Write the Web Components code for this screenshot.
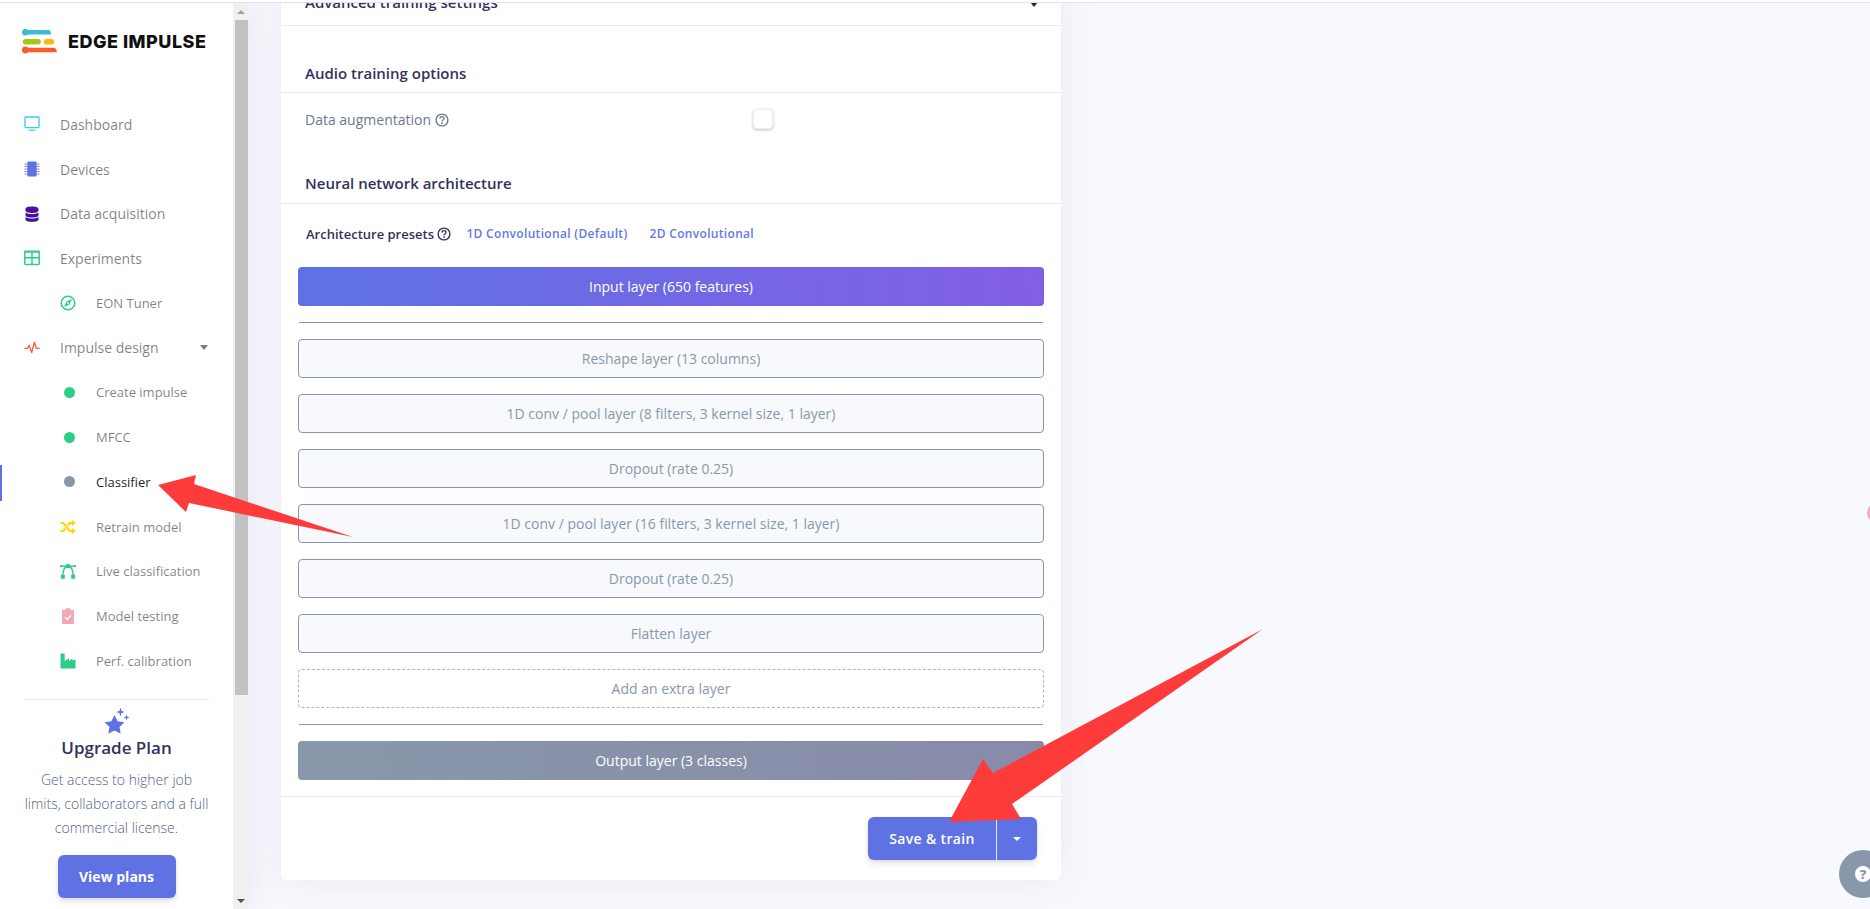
<!DOCTYPE html>
<html>
<head>
<meta charset="utf-8">
<title>Edge Impulse - Classifier</title>
<style>
  html, body { margin: 0; height: 909px; overflow: hidden; background: #f8f9fe; }
  body { font-family: "Open Sans", "Liberation Sans", sans-serif; position: relative; }
</style>
</head>
<body>
<ei-app>
  <ei-sidebar slot="sidebar">
    <ei-nav-item icon="monitor">Dashboard</ei-nav-item>
    <ei-nav-item icon="chip">Devices</ei-nav-item>
    <ei-nav-item icon="database">Data acquisition</ei-nav-item>
    <ei-nav-item icon="table">Experiments</ei-nav-item>
    <ei-nav-item icon="compass" sub>EON Tuner</ei-nav-item>
    <ei-nav-item icon="pulse" caret>Impulse design</ei-nav-item>
    <ei-nav-item icon="dot-green" sub>Create impulse</ei-nav-item>
    <ei-nav-item icon="dot-green" sub>MFCC</ei-nav-item>
    <ei-nav-item icon="dot-grey" sub active>Classifier</ei-nav-item>
    <ei-nav-item icon="shuffle" sub>Retrain model</ei-nav-item>
    <ei-nav-item icon="bezier" sub>Live classification</ei-nav-item>
    <ei-nav-item icon="clipboard" sub>Model testing</ei-nav-item>
    <ei-nav-item icon="factory" sub>Perf. calibration</ei-nav-item>
  </ei-sidebar>
  <ei-card slot="main">
    <ei-advanced-row>Advanced training settings</ei-advanced-row>
    <ei-heading>Audio training options</ei-heading>
    <ei-option-row>Data augmentation</ei-option-row>
    <ei-heading lift>Neural network architecture</ei-heading>
    <ei-presets></ei-presets>
    <ei-layer-stack>
      <ei-layer kind="input">Input layer (650 features)</ei-layer>
      <ei-rule></ei-rule>
      <ei-layer>Reshape layer (13 columns)</ei-layer>
      <ei-layer>1D conv / pool layer (8 filters, 3 kernel size, 1 layer)</ei-layer>
      <ei-layer>Dropout (rate 0.25)</ei-layer>
      <ei-layer>1D conv / pool layer (16 filters, 3 kernel size, 1 layer)</ei-layer>
      <ei-layer>Dropout (rate 0.25)</ei-layer>
      <ei-layer>Flatten layer</ei-layer>
      <ei-layer kind="add">Add an extra layer</ei-layer>
      <ei-rule></ei-rule>
      <ei-layer kind="output">Output layer (3 classes)</ei-layer>
    </ei-layer-stack>
    <ei-card-footer></ei-card-footer>
  </ei-card>
</ei-app>
<ei-overlays></ei-overlays>

<script>
const ICONS = {
  monitor: `<rect x="1" y="1" width="14" height="10.6" rx=".8" fill="none" stroke="#36cdf2" stroke-width="1.3"/><path d="M4.6 14.2h6.8" stroke="#36cdf2" stroke-width="1.3"/>`,
  chip: `<rect x="3.2" y="0.5" width="9.6" height="15" rx="1.6" fill="#5e72e4"/><path d="M.6 3h2M.6 5.5h2M.6 8h2M.6 10.5h2M.6 13h2M13.4 3h2M13.4 5.5h2M13.4 8h2M13.4 10.5h2M13.4 13h2" stroke="#5e72e4" stroke-width="1"/>`,
  database: `<path d="M1.5 3C1.5 1.3 4.4.5 8 .5s6.5.8 6.5 2.5v1.6c0 1.7-2.9 2.5-6.5 2.5s-6.5-.8-6.5-2.500zM1.500 6.600C3 7.700 5.400 8.100 8 8.100s5-.4 6.500-1.500v2.600c0 1.600-2.900 2.400-6.500 2.400s-6.500-.8-6.500-2.400zM1.500 11.100c1.500 1.100 3.900 1.500 6.500 1.500s5-.4 6.500-1.500v2.300c0 1.600-2.900 2.400-6.500 2.400s-6.500-.8-6.500-2.400z" fill="#4a0f9e"/>`,
  table: `<rect x=".8" y="1.200" width="14.400" height="13.200" rx=".6" fill="none" stroke="#2dce89" stroke-width="1.500"/><path d="M.8 7.800h14.400M8 1.200v13.200" stroke="#2dce89" stroke-width="1.500"/><path d="M.8 2h14.400" stroke="#2dce89" stroke-width="1.500"/>`,
  compass: `<circle cx="8" cy="8" r="6.800" fill="none" stroke="#2dce89" stroke-width="1.500"/><path d="M12 4 9.600 9.600 4 12 6.400 6.400z" fill="#2dce89"/><circle cx="8" cy="8" r=".9" fill="#fff"/>`,
  pulse: `<path d="M.3 8.300h3.200L5.200 5.200l2.500 7.300 2.700-10.400 1.900 6.200h3.400" fill="none" stroke="#fb5a3c" stroke-width="1.300" stroke-linejoin="round"/>`,
  shuffle: `<path d="M.6 4h2.800l6.400 8h2.600M.6 12h2.800l2-2.500M8 6.400 9.800 4h2.600" fill="none" stroke="#ffd600" stroke-width="2.200"/><path d="M12 .9 15.800 4 12 7.100zM12 8.900 15.800 12 12 15.100z" fill="#ffd600"/>`,
  bezier: `<path d="M2.800 12.500C3 7 5 3.500 8 3.200c3 .3 5 3.800 5.200 9.300M.5 3.200h15" fill="none" stroke="#2dce89" stroke-width="1.500"/><rect x="6" y="1" width="4" height="4" rx=".6" fill="#2dce89"/><rect x=".8" y="11.800" width="4" height="4" rx=".6" fill="#2dce89"/><rect x="11.200" y="11.800" width="4" height="4" rx=".6" fill="#2dce89"/><circle cx="1" cy="3.200" r="1.100" fill="#2dce89"/><circle cx="15" cy="3.200" r="1.100" fill="#2dce89"/>`,
  clipboard: `<rect x="2" y="2" width="12" height="14" rx="1" fill="#f4a6b8"/><rect x="5.500" y=".3" width="5" height="3.500" rx=".8" fill="#f4a6b8"/><path d="M5 9.300 7.200 11.400 11 7.500" fill="none" stroke="#fff" stroke-width="1.500"/>`,
  factory: `<path d="M.5 15.500V.5h4.200v7.600L9 5.200v3l3.300-3 .2 2.300 3-1v9z" fill="#2dce89"/>`,
};

class EiIcon extends HTMLElement {
  constructor() {
    super();
    this.attachShadow({ mode: "open" });
  }

  connectedCallback() {
    const name = this.getAttribute("name");
    const dot = name.startsWith("dot-");
    this.shadowRoot.innerHTML = `
      <style>
        :host { display: flex; width: 16px; height: 16px; align-items: center; justify-content: center; }
        svg { width: 16px; height: 16px; display: block; }
        .dot { width: 11px; height: 11px; border-radius: 50%; background: ${name === "dot-grey" ? "#8898aa" : "#2dce89"}; margin-left: 2px; }
      </style>
      ${dot ? `<div class="dot"></div>` : `<svg viewBox="0 0 16 16">${ICONS[name]}</svg>`}
    `;
  }
}

class EiApp extends HTMLElement {
  constructor() {
    super();
    this.attachShadow({ mode: "open" });
    this.shadowRoot.innerHTML = `
      <style>
        :host { display: flex; flex-direction: column; height: 909px; overflow: hidden; }
        .top { flex: none; height: 2px; background: #fff; border-bottom: 1px solid #e3e3e6; position: relative; z-index: 3; }
        .row { flex: 1; display: flex; min-height: 0; }
        .main { flex: 1; min-width: 0; background: #f8f9fe; }
      </style>
      <div class="top"></div>
      <div class="row">
        <slot name="sidebar"></slot>
        <div class="main"><slot name="main"></slot></div>
      </div>
    `;
  }
}

class EiLogo extends HTMLElement {
  constructor() {
    super();
    this.attachShadow({ mode: "open" });
    this.shadowRoot.innerHTML = `
      <style>
        :host { display: flex; align-items: center; gap: 11px; }
        svg { width: 35px; height: 25px; display: block; }
        span { font: 800 18px/24px Inter, "Liberation Sans", sans-serif; color: #101014; letter-spacing: .5px; white-space: nowrap; }
      </style>
      <svg viewBox="0 0 35 25">
        <circle cx="3.300" cy="3.200" r="3.300" fill="#3abcd3"/>
        <path d="M3 1h24c1.200 0 1.700 1 2 4.500H3z" fill="#3abcd3"/>
        <rect x=".8" y="10" width="18" height="5.400" rx="2.700" fill="#a3c916"/>
        <rect x="21.800" y="10" width="10.400" height="5.400" rx="2.700" fill="#fbb90f"/>
        <circle cx="3.300" cy="21" r="3.400" fill="#fd5b2c"/>
        <path d="M3 18.800h29c1.500 0 2.500 1.700 3 4.500H3z" fill="#fd5b2c"/>
      </svg>
      <span>EDGE IMPULSE</span>
    `;
  }
}

class EiScrollbar extends HTMLElement {
  constructor() {
    super();
    this.attachShadow({ mode: "open" });
    this.shadowRoot.innerHTML = `
      <style>
        :host { display: flex; flex-direction: column; flex: none; width: 15px; background: #f1f1f1; }
        .btn { flex: none; height: 17px; display: flex; align-items: center; justify-content: center; }
        .up { width: 0; height: 0; border: 4px solid transparent; border-top: 0; border-bottom: 4px solid #a3a3a3; }
        .down { width: 0; height: 0; border: 4px solid transparent; border-bottom: 0; border-top: 4px solid #505050; }
        .track { flex: 1; padding-left: 2px; }
        .thumb { height: 675px; background: #c1c1c1; }
      </style>
      <div class="btn"><div class="up"></div></div>
      <div class="track"><div class="thumb"></div></div>
      <div class="btn"><div class="down"></div></div>
    `;
  }
}

class EiSidebar extends HTMLElement {
  constructor() {
    super();
    this.attachShadow({ mode: "open" });
    this.shadowRoot.innerHTML = `
      <style>
        :host { display: flex; flex: none; width: 248px; height: 906px; position: relative; z-index: 2; box-shadow: 0 0 32px rgba(136,152,170,.2); }
        .pane { width: 233px; background: #fff; display: flex; flex-direction: column; }
        ei-logo { margin: 26px 0 0 22px; }
        nav { margin-top: 48px; display: flex; flex-direction: column; }
        ei-upgrade { margin-top: 16px; }
      </style>
      <div class="pane">
        <ei-logo></ei-logo>
        <nav><slot></slot></nav>
        <ei-upgrade></ei-upgrade>
      </div>
      <ei-scrollbar></ei-scrollbar>
    `;
  }
}

class EiNavItem extends HTMLElement {
  constructor() {
    super();
    this.attachShadow({ mode: "open" });
  }

  connectedCallback() {
    const sub = this.hasAttribute("sub");
    const active = this.hasAttribute("active");
    this.shadowRoot.innerHTML = `
      <style>
        :host { display: flex; align-items: center; height: 44.7px; position: relative; padding-left: ${sub ? 60 : 24}px; font-size: ${sub ? 13 : 14}px; color: ${active ? "rgba(0,0,0,.9)" : "rgba(0,0,0,.5)"}; white-space: nowrap; }
        ei-icon { flex: none; margin-right: 20px; }
        .bar { position: absolute; left: 0; top: 5px; width: 2px; height: 36px; background: #5e72e4; }
        .caret { position: absolute; left: 200px; top: 20px; width: 0; height: 0; border: 4.500px solid transparent; border-bottom: 0; border-top: 5px solid #7a7a7a; }
      </style>
      ${active ? `<div class="bar"></div>` : ""}
      <ei-icon name="${this.getAttribute("icon")}"></ei-icon>
      <span><slot></slot></span>
      ${this.hasAttribute("caret") ? `<div class="caret"></div>` : ""}
    `;
  }
}

class EiUpgrade extends HTMLElement {
  constructor() {
    super();
    this.attachShadow({ mode: "open" });
    this.shadowRoot.innerHTML = `
      <style>
        :host { display: block; margin: 0 24px; border-top: 1px solid #e6e6ea; text-align: center; }
        svg { display: block; width: 28px; height: 28px; margin: 7px auto 0; position: relative; left: 0; }
        h3 { margin: 0; font-size: 17px; line-height: 26px; font-weight: 600; color: #32325d; }
        p { margin: 7px 0 0; font-size: 14px; line-height: 24px; font-weight: 300; color: #525f7f; }
        button { display: block; margin: 15px auto 0; width: 118px; height: 43px; border: 0; border-radius: 6px; background: #5e72e4; color: #fff; font: 700 14px "Open Sans", sans-serif; box-shadow: 0 4px 6px rgba(50,50,93,.11), 0 1px 3px rgba(0,0,0,.08); }
      </style>
      <svg viewBox="0 0 28 28">
        <path d="M11.500 8 14.600 14.200 21.500 15.200 16.500 20 17.700 26.800 11.500 23.600 5.300 26.800 6.500 20 1.500 15.200 8.400 14.200z" fill="#5e72e4"/>
        <path d="M17.500 .5 18.600 3.900 22 5 18.600 6.100 17.500 9.500 16.400 6.100 13 5 16.400 3.900z" fill="#5e72e4"/>
        <path d="M23.500 7.500 24.300 9.700 26.500 10.500 24.300 11.300 23.500 13.500 22.700 11.300 20.500 10.500 22.700 9.700z" fill="#5e72e4"/>
      </svg>
      <h3>Upgrade Plan</h3>
      <p>Get access to higher job limits, collaborators and a full commercial license.</p>
      <button>View plans</button>
    `;
  }
}

class EiCard extends HTMLElement {
  constructor() {
    super();
    this.attachShadow({ mode: "open" });
    this.shadowRoot.innerHTML = `
      <style>
        :host { display: block; width: 780px; margin: -24px 0 0 33px; background: #fff; border-radius: 6px; box-shadow: 0 0 32px rgba(136,152,170,.15); color: #525f7f; }
      </style>
      <slot></slot>
    `;
  }
}

class EiAdvancedRow extends HTMLElement {
  constructor() {
    super();
    this.attachShadow({ mode: "open" });
    this.shadowRoot.innerHTML = `
      <style>
        :host { display: flex; align-items: center; justify-content: space-between; box-sizing: border-box; height: 47px; padding: 0 24px; border-bottom: 1px solid #e9ecef; font-size: 15px; font-weight: 600; color: #32325d; }
        .caret { width: 0; height: 0; border: 4.500px solid transparent; border-bottom: 0; border-top: 5px solid #172b4d; margin: 5px -1px 0 0; }
      </style>
      <span><slot></slot></span>
      <div class="caret"></div>
    `;
  }
}

class EiHeading extends HTMLElement {
  constructor() {
    super();
    this.attachShadow({ mode: "open" });
    this.shadowRoot.innerHTML = `
      <style>
        :host { display: block; padding: 36px 24px 8px; line-height: 22px; border-bottom: 1px solid #e9ecef; font-size: 15px; font-weight: 600; color: #32325d; }
        :host([lift]) { padding: 35px 24px 9px; }
      </style>
      <slot></slot>
    `;
  }
}

class EiHelpIcon extends HTMLElement {
  constructor() {
    super();
    this.attachShadow({ mode: "open" });
    this.shadowRoot.innerHTML = `
      <style>
        :host { display: inline-flex; width: 14px; height: 14px; vertical-align: -2px; }
        svg { width: 14px; height: 14px; }
      </style>
      <svg viewBox="0 0 14 14">
        <circle cx="7" cy="7" r="5.900" fill="none" stroke="currentColor" stroke-width="1.400"/>
        <path d="M5 5.500C5 4.300 5.900 3.700 7 3.700s2 .7 2 1.700c0 1.500-2 1.500-2 3" fill="none" stroke="currentColor" stroke-width="1.300"/>
        <circle cx="7" cy="10.100" r=".9" fill="currentColor"/>
      </svg>
    `;
  }
}

class EiOptionRow extends HTMLElement {
  constructor() {
    super();
    this.attachShadow({ mode: "open" });
    this.shadowRoot.innerHTML = `
      <style>
        :host { display: grid; grid-template-columns: 448px auto; grid-template-rows: 22px; align-items: center; padding: 16px 24px 6px; font-size: 14px; line-height: 22px; color: #6b7a90; }
        .box { width: 20px; height: 20px; margin-top: -2px; box-sizing: border-box; border-radius: 4px; background: #fff; border: 1px solid #eceef1; box-shadow: 0 1px 3px rgba(50,50,93,.3); }
      </style>
      <div><slot></slot> <ei-help-icon></ei-help-icon></div>
      <div class="box"></div>
    `;
  }
}

class EiPresets extends HTMLElement {
  constructor() {
    super();
    this.attachShadow({ mode: "open" });
    this.shadowRoot.innerHTML = `
      <style>
        :host { display: flex; align-items: center; height: 20px; padding: 20px 0 23px 25px; font-size: 13px; line-height: 20px; white-space: nowrap; }
        .label { font-weight: 600; color: #32325d; margin-right: 15px; }
        a { font-size: 12px; font-weight: 600; letter-spacing: .32px; color: #6478e6; margin-right: 22px; }
      </style>
      <span class="label">Architecture presets <ei-help-icon></ei-help-icon></span>
      <a>1D Convolutional (Default)</a>
      <a>2D Convolutional</a>
    `;
  }
}

class EiLayerStack extends HTMLElement {
  constructor() {
    super();
    this.attachShadow({ mode: "open" });
    this.shadowRoot.innerHTML = `
      <style>
        :host { display: flex; flex-direction: column; gap: 16px; padding: 0 17px 16px; }
      </style>
      <slot></slot>
    `;
  }
}

class EiRule extends HTMLElement {
  constructor() {
    super();
    this.attachShadow({ mode: "open" });
    this.shadowRoot.innerHTML = `
      <style>
        :host { display: block; height: 1px; margin: 0 1px; background: #8898aa; }
      </style>
    `;
  }
}

class EiLayer extends HTMLElement {
  constructor() {
    super();
    this.attachShadow({ mode: "open" });
    this.shadowRoot.innerHTML = `
      <style>
        :host { display: flex; align-items: center; justify-content: center; box-sizing: border-box; height: 39px; border-radius: 4px; border: 1px solid #8898aa; background: #f7f9fd; color: #8898aa; font-size: 14px; }
        :host([kind="input"]) { border: 0; background: linear-gradient(87deg, #5e72e4, #825ee4); color: #fff; font-weight: 500; }
        :host([kind="output"]) { border: 0; background: linear-gradient(87deg, #8898aa, #888aaa); color: #fff; font-weight: 500; }
        :host([kind="add"]) { border: 1px dashed #b5b5b5; background: #fff; }
      </style>
      <slot></slot>
    `;
  }
}

class EiCardFooter extends HTMLElement {
  constructor() {
    super();
    this.attachShadow({ mode: "open" });
    this.shadowRoot.innerHTML = `
      <style>
        :host { display: flex; justify-content: flex-end; padding: 20px 24px; border-top: 1px solid #e9ecef; }
        .split { display: flex; height: 43px; border-radius: 6px; background: #5e72e4; color: #fff; box-shadow: 0 4px 6px rgba(50,50,93,.11), 0 1px 3px rgba(0,0,0,.08); font-size: 14px; font-weight: 600; letter-spacing: .35px; }
        .save { width: 128px; display: flex; align-items: center; justify-content: center; border-right: 1px solid #e6e9fb; }
        .more { width: 40px; display: flex; align-items: center; justify-content: center; }
        .more i { width: 0; height: 0; border: 4px solid transparent; border-bottom: 0; border-top: 4px solid #fff; }
      </style>
      <div class="split">
        <div class="save">Save &amp; train</div>
        <div class="more"><i></i></div>
      </div>
    `;
  }
}

// red annotation arrows and the floating widgets sit over everything else
class EiOverlays extends HTMLElement {
  constructor() {
    super();
    this.attachShadow({ mode: "open" });
    this.shadowRoot.innerHTML = `
      <style>
        :host { position: absolute; inset: 0; display: block; pointer-events: none; z-index: 10; overflow: hidden; }
        svg { position: absolute; inset: 0; width: 1870px; height: 909px; }
        .pink { position: absolute; left: 1867px; top: 503px; width: 20px; height: 20px; border-radius: 50%; background: #f7a8c4; }
        .fab { position: absolute; left: 1839px; top: 850px; width: 48px; height: 48px; border-radius: 50%; background: #8898aa; }
        .fab b { position: absolute; left: 16px; top: 16px; width: 16px; height: 16px; border-radius: 50%; background: #fff; color: #8898aa; font: 800 13px/16px "Open Sans", sans-serif; text-align: center; }
      </style>
      <div class="pink"></div>
      <div class="fab"><b>?</b></div>
      <svg viewBox="0 0 1870 909">
        <polygon fill="#fe3b3b" points="158,485 196,475 194,484 353,537 189,503 186,512"/>
        <polygon fill="#fe3b3b" points="1263,629 993,773 983,759 949,822 1021,819 1012,804"/>
      </svg>
    `;
  }
}

customElements.define("ei-icon", EiIcon);
customElements.define("ei-help-icon", EiHelpIcon);
customElements.define("ei-logo", EiLogo);
customElements.define("ei-scrollbar", EiScrollbar);
customElements.define("ei-upgrade", EiUpgrade);
customElements.define("ei-nav-item", EiNavItem);
customElements.define("ei-sidebar", EiSidebar);
customElements.define("ei-app", EiApp);
customElements.define("ei-card", EiCard);
customElements.define("ei-advanced-row", EiAdvancedRow);
customElements.define("ei-heading", EiHeading);
customElements.define("ei-option-row", EiOptionRow);
customElements.define("ei-presets", EiPresets);
customElements.define("ei-layer-stack", EiLayerStack);
customElements.define("ei-rule", EiRule);
customElements.define("ei-layer", EiLayer);
customElements.define("ei-card-footer", EiCardFooter);
customElements.define("ei-overlays", EiOverlays);
</script>
</body>
</html>
